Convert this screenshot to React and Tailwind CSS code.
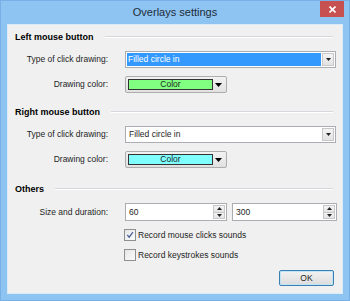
import React from 'react'

const font = { fontFamily: '"Liberation Sans", Arial, sans-serif' }

function GroupHeader({ title, className = '' }) {
  return (
    <div className={`flex items-center h-[14px] pl-[7px] pr-[9px] ${className}`}>
      <span className="text-[9px] font-bold text-black leading-none">{title}</span>
      <div className="flex-1 ml-[11px] border-t border-[#d5d9dd] border-b border-b-white" />
    </div>
  )
}

function Label({ children }) {
  return (
    <div className="w-[100px] text-right text-[8.5px] text-[#1e1e1e] leading-none">{children}</div>
  )
}

function ArrowDown() {
  return (
    <svg width="7" height="4" viewBox="0 0 7 4">
      <polygon points="0,0 7,0 3.5,4" fill="#000" />
    </svg>
  )
}

function Combo({ text, selected }) {
  return (
    <div className="ml-[17px] w-[211px] h-[17px] flex items-stretch border border-[#abadb3] bg-white p-[1px]">
      <div className="flex-1 flex items-center">
        <span
          className={`h-full w-full flex items-center pl-[1px] text-[8.5px] leading-none ${
            selected ? 'bg-[#3399ff] text-white' : 'text-[#1e1e1e] pl-[2px]'
          }`}
        >
          {text}
        </span>
      </div>
      <div className="w-[12px] ml-[1px] flex items-center justify-center border border-[#c8c8c8] bg-gradient-to-b from-[#f4f4f4] to-[#e2e2e2]">
        <svg width="5" height="3" viewBox="0 0 5 3">
          <polygon points="0,0 5,0 2.5,3" fill="#222" />
        </svg>
      </div>
    </div>
  )
}

function ColorButton({ color }) {
  return (
    <div className="ml-[17px] w-[102px] h-[17px] flex items-center border border-[#adadad] rounded-[2px] bg-gradient-to-b from-[#f2f2f2] to-[#e1e1e1] px-[2px]">
      <div
        className={`w-[85px] h-[11px] border border-[#333] flex items-center justify-center text-[8.5px] leading-none text-[#1e1e1e] ${color}`}
      >
        Color
      </div>
      <div className="flex-1 flex items-center justify-center">
        <ArrowDown />
      </div>
    </div>
  )
}

function Spin({ value, width }) {
  return (
    <div className={`${width} h-[18px] flex items-stretch border border-[#abadb3] bg-white`}>
      <div className="flex-1 flex items-center pl-[3px] text-[8.5px] leading-none text-[#1e1e1e]">{value}</div>
      <div className="w-[12px] flex flex-col my-[1px] mr-[1px]">
        <div className="flex-1 flex items-center justify-center border border-[#c8c8c8] bg-gradient-to-b from-[#f4f4f4] to-[#e4e4e4]">
          <svg width="5" height="3" viewBox="0 0 5 3">
            <polygon points="0,3 5,3 2.5,0" fill="#222" />
          </svg>
        </div>
        <div className="flex-1 flex items-center justify-center border border-t-0 border-[#c8c8c8] bg-gradient-to-b from-[#f4f4f4] to-[#e4e4e4]">
          <svg width="5" height="3" viewBox="0 0 5 3">
            <polygon points="0,0 5,0 2.5,3" fill="#222" />
          </svg>
        </div>
      </div>
    </div>
  )
}

function Check({ checked, label, className = '' }) {
  return (
    <div className={`flex items-center h-[12px] pl-[116px] ${className}`}>
      <div className="w-[12px] h-[12px] border border-[#8e8f8f] bg-gradient-to-br from-[#e6e6e6] to-[#fbfbfb] flex items-center justify-center">
        {checked && (
          <svg width="8" height="8" viewBox="0 0 9 9">
            <path d="M1.5 4.5 L3.6 7 L7.8 1.2" fill="none" stroke="#4a5f97" strokeWidth="1.4" />
          </svg>
        )}
      </div>
      <span className="ml-[2px] text-[8.5px] leading-none text-[#1e1e1e]">{label}</span>
    </div>
  )
}

export default function App() {
  return (
    <div
      className="w-[350px] h-[301px] bg-[#8dc4f2] border border-[#76b0e6] flex flex-col overflow-hidden"
      style={font}
    >
      {/* Title bar */}
      <div className="h-[23px] relative flex items-center justify-center">
        <span className="text-[11px] text-[#1f2b38] leading-none mt-[-1px]">Overlays settings</span>
        <div className="absolute right-[5px] top-0 w-[24px] h-[16px] bg-[#c75050] flex items-center justify-center">
          <svg width="7" height="7" viewBox="0 0 7 7">
            <path d="M0.5 0.5 L6.5 6.5 M6.5 0.5 L0.5 6.5" stroke="#fff" strokeWidth="1.6" />
          </svg>
        </div>
      </div>

      {/* Client area */}
      <div className="mx-[6px] h-[270px] bg-[#f0f0f0] border border-[#d9ebf9] flex flex-col">
        <GroupHeader title="Left mouse button" className="mt-[5px]" />

        <div className="flex items-center mt-[7px] h-[17px]">
          <Label>Type of click drawing:</Label>
          <Combo text="Filled circle in" selected />
        </div>
        <div className="flex items-center mt-[8px] h-[17px]">
          <Label>Drawing color:</Label>
          <ColorButton color="bg-[#80ff80]" />
        </div>

        <GroupHeader title="Right mouse button" className="mt-[12px]" />

        <div className="flex items-center mt-[7px] h-[17px]">
          <Label>Type of click drawing:</Label>
          <Combo text="Filled circle in" />
        </div>
        <div className="flex items-center mt-[8px] h-[17px]">
          <Label>Drawing color:</Label>
          <ColorButton color="bg-[#80ffff]" />
        </div>

        <GroupHeader title="Others" className="mt-[14px]" />

        <div className="flex items-center mt-[7px] h-[18px]">
          <Label>Size and duration:</Label>
          <div className="ml-[17px] flex gap-[5px]">
            <Spin value="60" width="w-[102px]" />
            <Spin value="300" width="w-[105px]" />
          </div>
        </div>

        <Check checked label="Record mouse clicks sounds" className="mt-[8px]" />
        <Check label="Record keystrokes sounds" className="mt-[8px]" />

        <div className="flex justify-end mt-[9px] pr-[8px]">
          <div className="w-[55px] h-[16px] rounded-[2px] border border-[#3c7fb1] bg-gradient-to-b from-[#f2f2f2] to-[#dcdcdc] flex items-center justify-center text-[8.5px] leading-none text-[#1e1e1e] shadow-[inset_0_0_0_1px_#bfe3f7]">
            OK
          </div>
        </div>
      </div>
    </div>
  )
}
